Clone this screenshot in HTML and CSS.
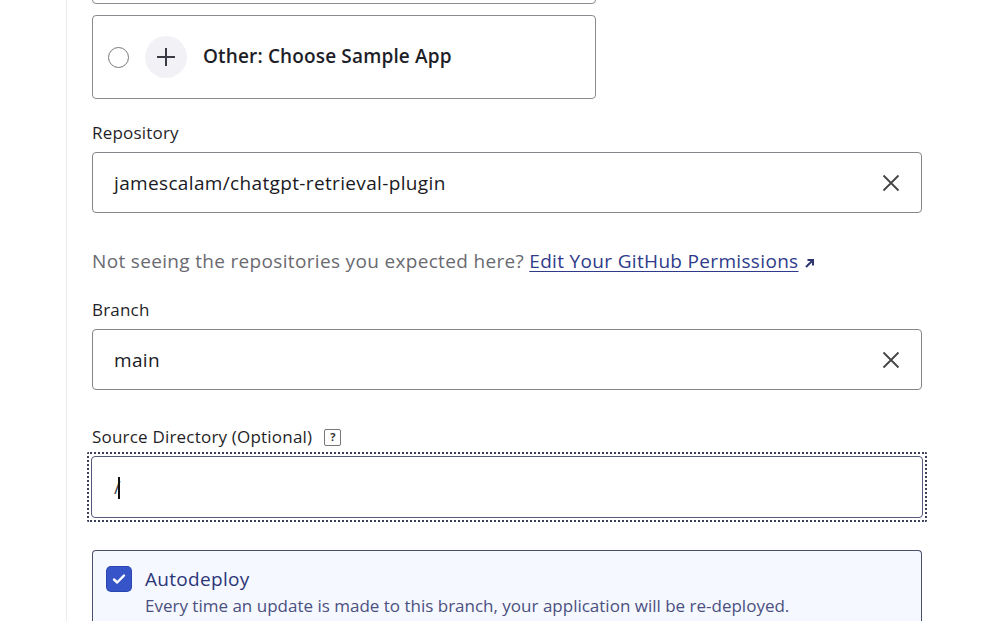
FILE: index.html
```html
<!DOCTYPE html>
<html>
<head>
<meta charset="utf-8">
<link rel="stylesheet" href="styles.css">
</head>
<body>
<div class="page">
  <aside class="sidebar"></aside>
  <main class="content">
    <div class="option option-prev"></div>
    <div class="option">
      <span class="radio"></span>
      <span class="plus">
        <svg width="22" height="22" viewBox="0 0 22 22"><path d="M11 2v18M2 11h18" stroke="#3a3a44" stroke-width="2" fill="none"/></svg>
      </span>
      <span class="option-label">Other: Choose Sample App</span>
    </div>

    <label class="field-label lbl-repo">Repository</label>
    <div class="input">
      <span class="input-text">jamescalam/chatgpt-retrieval-plugin</span>
      <svg class="clear" width="18" height="18" viewBox="0 0 18 18"><path d="M1.5 1.5l15 15M16.5 1.5l-15 15" stroke="#444" stroke-width="1.8" fill="none"/></svg>
    </div>

    <p class="help">Not seeing the repositories you expected here? <a class="link" href="#">Edit Your GitHub Permissions</a> <svg class="ext" width="11" height="11" viewBox="0 0 11 11"><path d="M2 9L9 2M3.5 2H9v5.5" stroke="#2c3570" stroke-width="2" fill="none"/></svg></p>

    <label class="field-label lbl-branch">Branch</label>
    <div class="input">
      <span class="input-text">main</span>
      <svg class="clear" width="18" height="18" viewBox="0 0 18 18"><path d="M1.5 1.5l15 15M16.5 1.5l-15 15" stroke="#444" stroke-width="1.8" fill="none"/></svg>
    </div>

    <div class="field-label lbl-source">Source Directory (Optional) <span class="qmark">?</span></div>
    <div class="focus-ring">
      <div class="input input-focus">
        <span class="input-text slash">/<span class="caret"></span></span>
      </div>
    </div>

    <div class="autodeploy">
      <span class="checkbox">
        <svg width="16" height="16" viewBox="0 0 16 16"><path d="M3 8.5l3.2 3L13 4.5" stroke="#fff" stroke-width="2.4" fill="none" stroke-linecap="round" stroke-linejoin="round"/></svg>
      </span>
      <div class="ad-text">
        <div class="ad-title">Autodeploy</div>
        <div class="ad-sub">Every time an update is made to this branch, your application will be re-deployed.</div>
      </div>
    </div>
  </main>
</div>
</body>
</html>
```
FILE: styles.css
```css
* { box-sizing: border-box; }
html, body { margin: 0; padding: 0; background: #fff; }
body {
  font-family: "Open Sans", "Liberation Sans", sans-serif;
  color: #1e1e28;
  overflow: hidden;
  height: 621px;
}
.page { display: flex; height: 621px; }
.sidebar { width: 67px; flex: none; border-right: 1px solid #ececef; }
.content { flex: 1; padding-left: 25px; padding-right: 83px; }

.option {
  width: 504px;
  height: 84px;
  border: 1.5px solid #8a8a90;
  border-radius: 4px;
  display: flex;
  align-items: center;
  padding-left: 15px;
}
.option-prev { margin-top: -80px; margin-bottom: 11px; }
.radio {
  width: 21px; height: 21px;
  border: 1.5px solid #77777d;
  border-radius: 50%;
  flex: none;
}
.plus {
  width: 42px; height: 42px; border-radius: 50%;
  background: #f2f2f6;
  display: flex; align-items: center; justify-content: center;
  margin-left: 16px; flex: none;
}
.option-label { margin-left: 16px; font-size: 19px; font-weight: 600; letter-spacing: 0.15px; color: #1e1e28; line-height: 24px; margin-top: -2px; }

.field-label { display: block; font-size: 17px; letter-spacing: 0.2px; color: #1f1f28; line-height: 20px; }
.lbl-repo { margin-top: 24px; margin-bottom: 9px; }
.lbl-branch { margin-top: 0; margin-bottom: 9px; }
.lbl-source { margin-top: 37px; margin-bottom: 5px; display: flex; align-items: center; }

.input {
  height: 61px;
  border: 1.5px solid #85858b;
  border-radius: 4px;
  display: flex; align-items: center; justify-content: space-between;
  padding: 0 21px;
}
.input-text { font-size: 19px; letter-spacing: 0.35px; color: #1a1a24; }
.clear { margin-right: 0; }

.help { margin: 37px 0 0; font-size: 19px; letter-spacing: 0.33px; color: #6a6a70; line-height: 22px; height: 50px; }
.link { color: #2f3a8a; text-decoration: underline; text-underline-offset: 3px; }
.ext { vertical-align: -1px; }

.qmark {
  display: inline-flex; width: 17px; height: 17px; margin-left: 12px;
  border: 1px solid #777; border-radius: 2px;
  font-size: 11px; font-weight: 700; align-items: center; justify-content: center;
  color: #333; letter-spacing: 0;
}

.focus-ring {
  border: 2px dotted #3c3f5a;
  padding: 2px;
  margin: 0 -5px;
  border-radius: 2px;
}
.input-focus { height: 62px; border-color: #55597a; padding-left: 22px; }
.slash { position: relative; font-size: 18px; color: #444; }
.caret {
  position: absolute; left: 4px; top: 2px; width: 1.5px; height: 22px; background: #111;
}

.autodeploy {
  margin-top: 28px;
  border: 1.5px solid #4a4e6e;
  border-bottom: none;
  border-radius: 4px 4px 0 0;
  background: #f5f8ff;
  height: 80px;
  display: flex;
  padding: 16px 14px;
  gap: 14px;
}
.checkbox {
  width: 24px; height: 24px; border-radius: 4px;
  background: #3754c9;
  display: flex; align-items: center; justify-content: center;
  flex: none;
  box-shadow: 0 0 0 1px #2a44b0;
}
.ad-title { font-size: 19px; color: #2c3678; font-weight: 500; letter-spacing: 0.3px; line-height: 24px; margin-top: 0; }
.ad-sub { font-size: 17px; color: #4b5080; margin-top: 3px; }
```
